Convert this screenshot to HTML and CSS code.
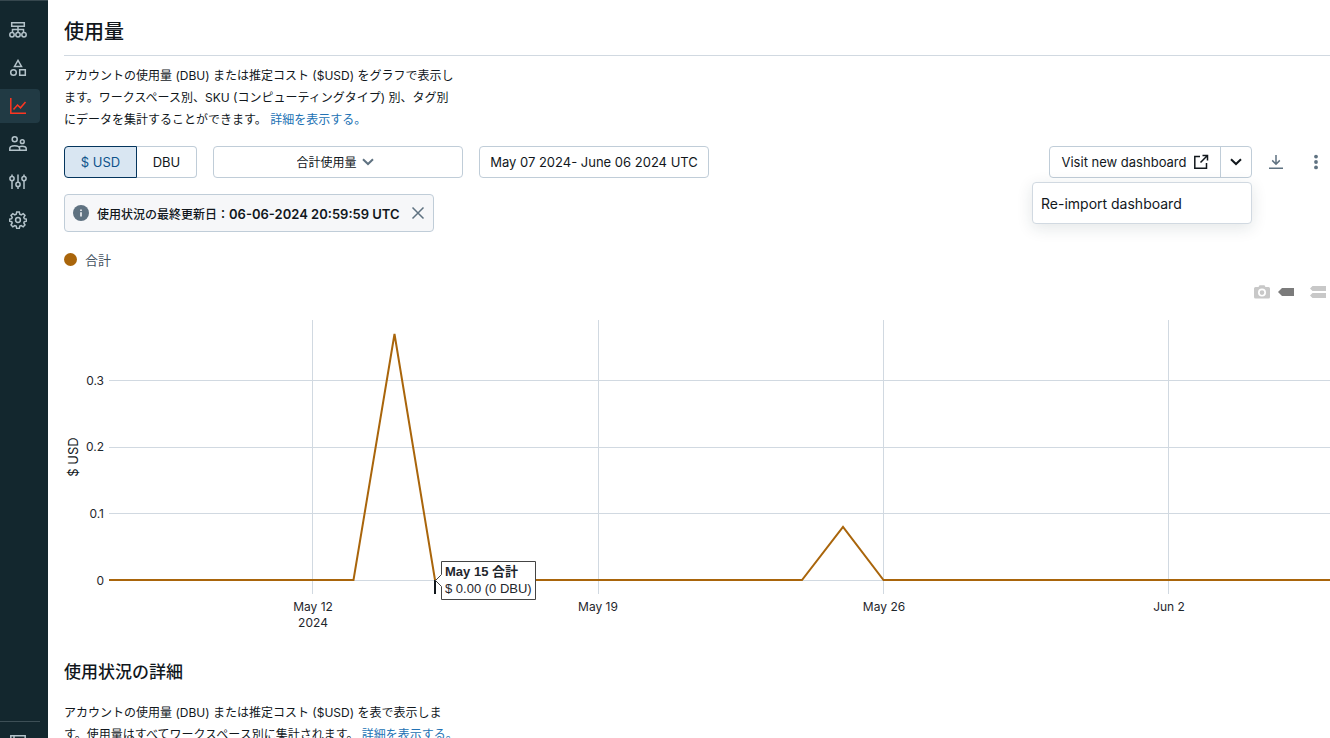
FILE: index.html
```html
<!DOCTYPE html>
<html lang="ja">
<head>
    <meta charset="UTF-8">
    <meta name="viewport" content="width=device-width, initial-scale=1.0">
    <title>使用量</title>
    <link rel="stylesheet" href="styles.css">
</head>
<body>
    <div class="shell">
        <nav class="sidebar">
            <div class="nav-group">
                <a href="#" class="nav-item" aria-label="ワークスペース">
                    <svg width="18" height="18" viewBox="0 0 18 18">
                        <path d="M2.7 1.7h12.6v3.6H2.7zM9 5.3v6M3.5 11.3V8.5h11v2.8"/>
                        <circle cx="3" cy="13.7" r="2.2"/>
                        <circle cx="9" cy="13.7" r="2.2"/>
                        <circle cx="15" cy="13.7" r="2.2"/>
                    </svg>
                </a>
                <a href="#" class="nav-item" aria-label="カタログ">
                    <svg width="18" height="18" viewBox="0 0 18 18">
                        <path d="M9 1.4l3.5 6h-7zM10.7 10.7h5.6v5.6h-5.6z"/>
                        <circle cx="4.5" cy="13.5" r="2.8"/>
                    </svg>
                </a>
                <a href="#" class="nav-item active" aria-label="使用量">
                    <svg width="18" height="18" viewBox="0 0 18 18">
                        <path d="M1.8 1v15.2H17M4.5 12.5l4-4.5 3 2.8 5-5.8"/>
                    </svg>
                </a>
                <a href="#" class="nav-item" aria-label="ユーザー管理">
                    <svg width="18" height="18" viewBox="0 0 18 18">
                        <circle cx="5.7" cy="4.3" r="2.5"/>
                        <circle cx="13.3" cy="6.7" r="1.9"/>
                        <path d="M.8 15.2v-1.7c0-1.6 2.2-2.8 4.9-2.8s4.9 1.2 4.9 2.8v1.7zM9.8 12c1-.6 2-.8 3.3-.8 2.4 0 4.1 1 4.1 2.4v1.6h-6.6"/>
                    </svg>
                </a>
                <a href="#" class="nav-item" aria-label="クラウドリソース">
                    <svg width="18" height="18" viewBox="0 0 18 18">
                        <circle cx="3" cy="5.6" r="2.1"/>
                        <circle cx="9" cy="11.4" r="2.1"/>
                        <circle cx="15" cy="5.6" r="2.1"/>
                        <path d="M3 1.5v2M3 7.7v8.3M9 1.5v7.8M9 13.5V16M15 1.5v2M15 7.7v8.3"/>
                    </svg>
                </a>
                <a href="#" class="nav-item" aria-label="設定">
                    <svg width="18" height="18" viewBox="-1 -1 18 18">
                        <circle cx="8" cy="8" r="2.4"/>
                        <path d="M6.7 0h2.6l.5 2.3 1.4.6 2-1.3 1.8 1.8-1.2 2 .5 1.3 2.2.5v2l-2.2.5-.5 1.3 1.2 2-1.8 1.8-2-1.3-1.4.6-.5 2.3H6.7l-.5-2.3-1.4-.6-2 1.3L1 13l1.2-2-.5-1.3-2.200-.5v-2l2.200-.5.5-1.300-1.200-2 1.800-1.800 2 1.300 1.400-.6z"/>
                    </svg>
                </a>
            </div>
            <div class="nav-footer">
                <a href="#" class="nav-toggle" aria-label="サイドバー">
                    <svg width="18" height="18" viewBox="0 0 18 18">
                        <path d="M1.8 1.8h14.4v14H1.8zM5 2v14"/>
                    </svg>
                </a>
            </div>
        </nav>

        <main class="content">
            <header class="page-header">
                <h1>使用量</h1>
            </header>

            <p class="description">アカウントの使用量 (DBU) または推定コスト ($USD) をグラフで表示します。ワークスペース別、SKU (コンピューティングタイプ) 別、タグ別にデータを集計することができます。 <a href="#">詳細を表示する。</a></p>

            <div class="toolbar">
                <div class="segmented">
                    <button type="button" class="selected">$ USD</button>
                    <button type="button">DBU</button>
                </div>
                <div class="select-box">
                    <select aria-label="集計方法">
                        <option>合計使用量</option>
                    </select>
                    <svg width="12" height="8" viewBox="0 0 12 8"><path d="M1 1.2l5 4.8 5-4.8"/></svg>
                </div>
                <button type="button" class="date-range">May 07 2024- June 06 2024 UTC</button>

                <div class="toolbar-right">
                    <div class="split-button">
                        <button type="button" class="visit">
                            Visit new dashboard
                            <svg width="16" height="16" viewBox="0 0 16 16"><path d="M7 2.5H1.8v11.7h11.7V9M9.5 1.5h5v5M14.2 1.8L7.5 8.5"/></svg>
                        </button>
                        <button type="button" class="caret" aria-label="その他のダッシュボード操作">
                            <svg width="12" height="8" viewBox="0 0 12 8"><path d="M1 1.2l5 4.8 5-4.8"/></svg>
                        </button>
                        <div class="menu">
                            <button type="button">Re-import dashboard</button>
                        </div>
                    </div>
                    <button type="button" class="icon-btn" aria-label="ダウンロード">
                        <svg width="16" height="16" viewBox="0 0 16 16"><path d="M8 1v9M4.2 6.4L8 10.2l3.8-3.8M1 14.2h14"/></svg>
                    </button>
                    <button type="button" class="icon-btn dots" aria-label="メニュー">
                        <svg width="16" height="16" viewBox="0 0 16 16">
                            <circle cx="8" cy="2.6" r="1.9"/>
                            <circle cx="8" cy="8" r="1.9"/>
                            <circle cx="8" cy="13.4" r="1.9"/>
                        </svg>
                    </button>
                </div>
            </div>

            <div class="notice">
                <svg class="info" width="16" height="16" viewBox="0 0 16 16">
                    <circle cx="8" cy="8" r="8"/>
                    <path d="M7.2 7.2h1.6v4.2H7.2zM7.2 4.5h1.6v1.6H7.2z"/>
                </svg>
                <span>使用状況の最終更新日：<strong>06-06-2024 20:59:59 UTC</strong></span>
                <button type="button" class="close" aria-label="閉じる">
                    <svg width="14" height="14" viewBox="0 0 14 14"><path d="M1.5 1.5l11 11M12.5 1.5l-11 11"/></svg>
                </button>
            </div>

            <div class="legend"><span class="legend-dot"></span>合計</div>

            <div class="modebar">
                <button type="button" aria-label="Download plot">
                    <svg width="16" height="16" viewBox="0 0 16 16">
                        <path fill-rule="evenodd" d="M1.5 3h3l1-1.8h5l1 1.8h3A1.5 1.5 0 0 1 16 4.5V13a1.5 1.5 0 0 1-1.5 1.5h-13A1.5 1.5 0 0 1 0 13V4.5A1.5 1.5 0 0 1 1.5 3zM8 4.6a4 4 0 1 0 0 8 4 4 0 0 0 0-8zM8 6.3a2.3 2.3 0 1 1 0 4.6 2.3 2.3 0 0 1 0-4.6z"/>
                    </svg>
                </button>
                <button type="button" class="on" aria-label="Show closest data on hover">
                    <svg width="16" height="16" viewBox="0 0 16 16"><path d="M0 8l4-4h12v8H4z"/></svg>
                </button>
                <button type="button" class="compare" aria-label="Compare data on hover">
                    <svg width="16" height="16" viewBox="0 0 16 16"><path d="M0 4.5L2.5 2H16v5H2.5zM0 11.5L2.5 9H16v5H2.5z"/></svg>
                </button>
            </div>

            <svg class="chart" role="img" aria-label="$ USD">
                <path class="grid" d="M45 76.5h2000M45 143.5h2000M45 209.5h2000M45 276.5h2000"/>
                <path class="grid" d="M248.5 16v274M534.5 16v274M819.5 16v274M1104.5 16v274"/>

                <g class="ticks y-ticks">
                    <text x="40" y="81">0.3</text>
                    <text x="40" y="147">0.2</text>
                    <text x="40" y="214">0.1</text>
                    <text x="40" y="281">0</text>
                </g>
                <g class="ticks x-ticks">
                    <text x="249" y="307">May 12</text>
                    <text x="249" y="323">2024</text>
                    <text x="534" y="307">May 19</text>
                    <text x="820" y="307">May 26</text>
                    <text x="1105" y="307">Jun 2</text>
                </g>
                <text class="axis-title" transform="translate(14 153) rotate(-90)">$ USD</text>

                <polyline class="series" points="45,276 289.5,276 330.5,30 371,276 738,276 779,223 819.5,276 2045,276"/>

                <!-- hover label -->
                <path class="spike" d="M371 276v14"/>
                <path class="hover-box" d="M371.5 276.5l6-6v-13h94v38h-94v-13z"/>
                <text class="hover-text bold" x="381" y="272">May 15 合計</text>
                <text class="hover-text" x="381" y="289">$ 0.00 (0 DBU)</text>
            </svg>

            <h2>使用状況の詳細</h2>
            <p class="description">アカウントの使用量 (DBU) または推定コスト ($USD) を表で表示します。使用量はすべてワークスペース別に集計されます。 <a href="#">詳細を表示する。</a></p>
        </main>
    </div>
</body>
</html>
```
FILE: styles.css
```css
* {
    box-sizing: border-box;
}

body {
    margin: 0;
    font-family: Inter, "Noto Sans CJK JP", sans-serif;
    font-size: 13px;
    color: #11171c;
    background-color: #fff;
}

button,
select {
    font: inherit;
    color: inherit;
    margin: 0;
    padding: 0;
    border: none;
    background: none;
    cursor: pointer;
}

svg {
    display: block;
    flex-shrink: 0;
}

.shell {
    display: flex;
    height: 100vh;
    overflow: hidden;
}

/* sidebar */
.sidebar {
    display: flex;
    flex-direction: column;
    justify-content: space-between;
    width: 48px;
    flex-shrink: 0;
    padding-right: 8px;
    background-color: #13272e;
    border-top: 1px solid #36474e;
}

.nav-group {
    display: flex;
    flex-direction: column;
    gap: 4px;
    padding-top: 12px;
}

.nav-item {
    display: flex;
    align-items: center;
    height: 34px;
    padding-left: 9px;
    border-radius: 0 4px 4px 0;
    color: #b4c3ca;
}

.nav-item.active {
    background-color: #213a44;
    color: #ff3621;
}

.sidebar svg {
    fill: none;
    stroke: currentColor;
    stroke-width: 1.5;
}

.nav-footer {
    height: 17px;
    padding: 12px 0 0 9px;
    border-top: 1px solid #3d4f56;
    overflow: hidden;
}

.nav-toggle {
    color: #b4c3ca;
}

/* content */
.content {
    flex: 1;
    min-width: 0;
    padding-left: 16px;
    overflow-x: hidden;
    overflow-y: auto;
    scrollbar-width: none;
}

.page-header {
    display: flex;
    align-items: center;
    height: 56px;
    padding-top: 8px;
    border-bottom: 1px solid #d1d9e1;
}

h1 {
    margin: 0;
    font-size: 20px;
    line-height: 28px;
    font-weight: 500;
}

h2 {
    margin: 24px 0 18px;
    font-size: 17px;
    line-height: 24px;
    font-weight: 500;
}

.description {
    max-width: 395px;
    margin: 9px 0 15px;
    font-size: 12px;
    line-height: 22px;
}

.description a {
    color: #2272b4;
    text-decoration: none;
}

.toolbar {
    display: flex;
    align-items: center;
    gap: 16px;
    height: 32px;
    padding-right: 6px;
}

.segmented {
    display: flex;
}

.segmented button {
    height: 32px;
    width: 60px;
    border: 1px solid #c0cdd8;
    border-left: none;
    border-radius: 0 4px 4px 0;
}

.segmented .selected {
    width: 73px;
    border: 1px solid #04355d;
    border-radius: 4px 0 0 4px;
    background-color: #d9e6f2;
    color: #0e538b;
}

.select-box {
    display: flex;
    align-items: center;
    justify-content: center;
    gap: 4px;
    width: 250px;
    height: 32px;
    padding-right: 6px;
    border: 1px solid #c0cdd8;
    border-radius: 4px;
}

.select-box select {
    appearance: none;
    font-size: 12px;
}

.select-box svg,
.caret svg {
    fill: none;
    stroke: #5f7281;
    stroke-width: 2;
}

.date-range {
    width: 230px;
    height: 32px;
    border: 1px solid #c0cdd8;
    border-radius: 4px;
}

.toolbar-right {
    display: flex;
    align-items: center;
    gap: 24px;
    margin-left: auto;
}

.split-button {
    position: relative;
    display: flex;
    height: 32px;
    margin-right: -8px;
    border: 1px solid #c0cdd8;
    border-radius: 4px;
}

.visit {
    display: flex;
    align-items: center;
    justify-content: center;
    gap: 6px;
    width: 170px;
}

.visit svg {
    fill: none;
    stroke: #11171c;
    stroke-width: 1.5;
}

.caret {
    display: flex;
    align-items: center;
    justify-content: center;
    width: 31px;
    border-left: 1px solid #c0cdd8;
}

.caret svg {
    stroke: #11171c;
}

.menu {
    position: absolute;
    top: 35px;
    right: -1px;
    width: 220px;
    padding: 4px 0;
    border: 1px solid #d1d9e1;
    border-radius: 4px;
    background-color: #fff;
    box-shadow: 0 4px 16px rgba(27, 49, 57, 0.12);
}

.menu button {
    display: block;
    width: 100%;
    height: 32px;
    padding: 0 8px;
    font-size: 14px;
    text-align: left;
}

.icon-btn svg {
    fill: none;
    stroke: #5f7281;
    stroke-width: 1.5;
}

.icon-btn.dots svg {
    fill: #5f7281;
    stroke: none;
}

.notice {
    display: flex;
    align-items: center;
    gap: 8px;
    width: 370px;
    height: 38px;
    margin-top: 16px;
    padding: 0 8px;
    border: 1px solid #c0cdd8;
    border-radius: 4px;
    background-color: #f6f7f9;
    font-size: 12px;
    font-weight: 500;
    white-space: nowrap;
}

.notice strong {
    font-size: 13px;
    font-weight: 600;
}

.info circle {
    fill: #5f7281;
}

.info path {
    fill: #f6f7f9;
}

.close {
    margin-left: auto;
}

.close svg {
    fill: none;
    stroke: #5f7281;
    stroke-width: 1.5;
}

.legend {
    display: flex;
    align-items: center;
    gap: 8px;
    height: 22px;
    margin-top: 16px;
    color: #44535f;
}

.legend-dot {
    width: 13px;
    height: 13px;
    border-radius: 50%;
    background-color: #a9650b;
}

/* chart */
.modebar {
    display: flex;
    justify-content: flex-end;
    gap: 8px;
    height: 16px;
    margin: 14px 0 4px;
    padding-right: 4px;
}

.modebar svg {
    fill: #c8c8c8;
}

.modebar .on svg {
    fill: #7b7b7b;
}

.modebar .compare {
    margin-left: 8px;
}

.chart {
    width: 100%;
    height: 332px;
}

.grid {
    fill: none;
    stroke: #d1d9e1;
}

.ticks {
    font-size: 12px;
    fill: #1f272d;
}

.y-ticks {
    text-anchor: end;
}

.x-ticks {
    text-anchor: middle;
}

.axis-title {
    font-size: 13px;
    text-anchor: middle;
    fill: #11171c;
}

.series {
    fill: none;
    stroke: #a9650b;
    stroke-width: 2;
}

.spike {
    stroke: #11171c;
    stroke-width: 2;
}

.hover-box {
    fill: #fff;
    stroke: #444;
}

.hover-text {
    font-family: "Liberation Sans", "Noto Sans CJK JP", sans-serif;
    font-size: 13px;
    fill: #1f272d;
}

.hover-text.bold {
    font-weight: bold;
}
```
